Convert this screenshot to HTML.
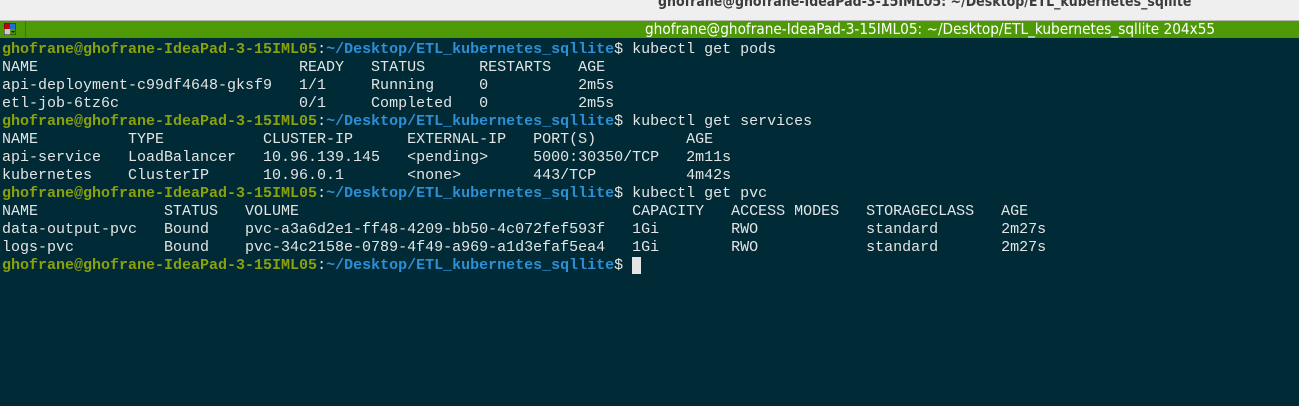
<!DOCTYPE html>
<html><head><meta charset="utf-8"><style>
html,body{margin:0;padding:0;width:1299px;height:406px;overflow:hidden;background:#002b36;}
.top{position:absolute;left:0;top:0;width:1299px;height:20px;background:#efefef;border-bottom:1px solid #b8b8b8;overflow:hidden;}
.top span{position:absolute;left:658px;top:-6px;font:bold 14px "DejaVu Sans Condensed","Liberation Sans",sans-serif;color:#3c3c3c;}
.bar{position:absolute;left:0;top:21px;width:1299px;height:17px;background:#4e9a06;}
.bar span{position:absolute;left:645px;top:0;font:15.2px "DejaVu Sans Condensed","Liberation Sans",sans-serif;color:#fff;line-height:17px;}
.ic{position:absolute;left:4px;top:2px;width:12px;height:12px;}
.sep{position:absolute;left:25px;top:0;width:1px;height:17px;background:#3d7a04;}
pre{position:absolute;left:2px;top:41px;margin:0;font:15px/18px "Liberation Mono",monospace;color:#e4e4e4;}
.g{color:#8aa10c;font-weight:bold}.b{color:#2d8fd6;font-weight:bold}
.cur{background:#e4e4e4;}
</style></head><body>
<div class="top"><span>ghofrane@ghofrane-IdeaPad-3-15IML05: ~/Desktop/ETL_kubernetes_sqllite</span></div>
<div class="bar"><svg class="ic" viewBox="0 0 12 12"><rect x="0" y="0" width="6" height="6" fill="#c00"/><rect x="6" y="0" width="6" height="6" fill="#1e6ed6"/><rect x="0" y="6" width="6" height="6" fill="#ccc"/><rect x="0" y="0" width="12" height="12" fill="none" stroke="#222" stroke-width="1"/><path d="M7 8h4l-2 2z" fill="#111"/></svg><div class="sep"></div><span>ghofrane@ghofrane-IdeaPad-3-15IML05: ~/Desktop/ETL_kubernetes_sqllite 204x55</span></div>
<pre><span class="g">ghofrane@ghofrane-IdeaPad-3-15IML05</span>:<span class="b">~/Desktop/ETL_kubernetes_sqllite</span>$ kubectl get pods
NAME                             READY   STATUS      RESTARTS   AGE
api-deployment-c99df4648-gksf9   1/1     Running     0          2m5s
etl-job-6tz6c                    0/1     Completed   0          2m5s
<span class="g">ghofrane@ghofrane-IdeaPad-3-15IML05</span>:<span class="b">~/Desktop/ETL_kubernetes_sqllite</span>$ kubectl get services
NAME          TYPE           CLUSTER-IP      EXTERNAL-IP   PORT(S)          AGE
api-service   LoadBalancer   10.96.139.145   &lt;pending&gt;     5000:30350/TCP   2m11s
kubernetes    ClusterIP      10.96.0.1       &lt;none&gt;        443/TCP          4m42s
<span class="g">ghofrane@ghofrane-IdeaPad-3-15IML05</span>:<span class="b">~/Desktop/ETL_kubernetes_sqllite</span>$ kubectl get pvc
NAME              STATUS   VOLUME                                     CAPACITY   ACCESS MODES   STORAGECLASS   AGE
data-output-pvc   Bound    pvc-a3a6d2e1-ff48-4209-bb50-4c072fef593f   1Gi        RWO            standard       2m27s
logs-pvc          Bound    pvc-34c2158e-0789-4f49-a969-a1d3efaf5ea4   1Gi        RWO            standard       2m27s
<span class="g">ghofrane@ghofrane-IdeaPad-3-15IML05</span>:<span class="b">~/Desktop/ETL_kubernetes_sqllite</span>$ <span class="cur"> </span></pre>
</body></html>
